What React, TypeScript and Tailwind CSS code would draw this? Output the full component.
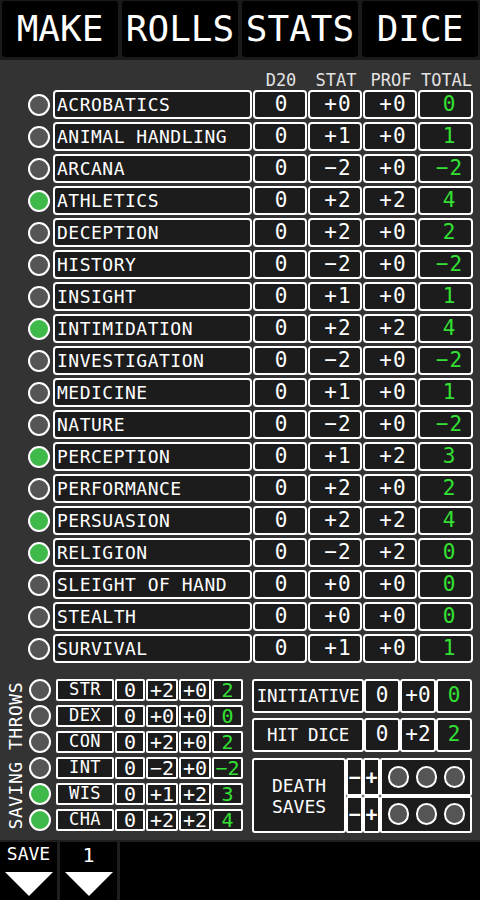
const tabs = ["MAKE", "ROLLS", "STATS", "DICE"];

const skills: [string, boolean, string, string, string][] = [
  ["ACROBATICS", false, "+0", "+0", "0"],
  ["ANIMAL HANDLING", false, "+1", "+0", "1"],
  ["ARCANA", false, "−2", "+0", "−2"],
  ["ATHLETICS", true, "+2", "+2", "4"],
  ["DECEPTION", false, "+2", "+0", "2"],
  ["HISTORY", false, "−2", "+0", "−2"],
  ["INSIGHT", false, "+1", "+0", "1"],
  ["INTIMIDATION", true, "+2", "+2", "4"],
  ["INVESTIGATION", false, "−2", "+0", "−2"],
  ["MEDICINE", false, "+1", "+0", "1"],
  ["NATURE", false, "−2", "+0", "−2"],
  ["PERCEPTION", true, "+1", "+2", "3"],
  ["PERFORMANCE", false, "+2", "+0", "2"],
  ["PERSUASION", true, "+2", "+2", "4"],
  ["RELIGION", true, "−2", "+2", "0"],
  ["SLEIGHT OF HAND", false, "+0", "+0", "0"],
  ["STEALTH", false, "+0", "+0", "0"],
  ["SURVIVAL", false, "+1", "+0", "1"],
];

const saves: [string, boolean, string, string, string][] = [
  ["STR", false, "+2", "+0", "2"],
  ["DEX", false, "+0", "+0", "0"],
  ["CON", false, "+2", "+0", "2"],
  ["INT", false, "−2", "+0", "−2"],
  ["WIS", true, "+1", "+2", "3"],
  ["CHA", true, "+2", "+2", "4"],
];

function Dot({ on, size = "w-[22px] h-[22px]" }: { on: boolean; size?: string }) {
  return (
    <div
      className={`${size} shrink-0 rounded-full border-2 border-white ${
        on ? "bg-[#3fb94a]" : "bg-[#555555]"
      }`}
    />
  );
}

function Triangle() {
  return (
    <svg width="48" height="24" viewBox="0 0 48 24">
      <polygon points="0,0 48,0 24,24" fill="#ffffff" />
    </svg>
  );
}

export default function App() {
  return (
    <div
      className="flex h-[900px] w-[480px] flex-col overflow-hidden bg-[#333333] text-white"
      style={{ fontFamily: '"DejaVu Sans Mono", "Liberation Mono", monospace' }}
    >
      {/* tabs */}
      <div className="flex h-[60px] shrink-0 gap-[4px] bg-[#1a1a1a] px-[2px] pb-[3px] pt-[1px]">
        {tabs.map((t) => (
          <div
            key={t}
            className="flex flex-1 items-center justify-center rounded-[3px] bg-black text-[36px] leading-none"
          >
            {t}
          </div>
        ))}
      </div>

      <main className="flex flex-1 flex-col">
        {/* column titles */}
        <div className="flex h-[30px] items-end pb-[1px] pl-[254px] text-[17px] leading-[17px] text-[#e2e2e2]">
          <span className="w-[54px] text-center">D20</span>
          <span className="ml-[1px] w-[54px] text-center">STAT</span>
          <span className="ml-[1px] w-[54px] text-center">PROF</span>
          <span className="ml-[1px] w-[55px] text-center">TOTAL</span>
        </div>

        {/* skills */}
        <div className="flex flex-col gap-[3px]">
          {skills.map(([name, prof, stat, bonus, total]) => (
            <div key={name} className="flex h-[29px] items-center pl-[28px]">
              <Dot on={prof} />
              <div className="ml-[3px] flex h-full w-[199px] items-center rounded-[4px] border-2 border-white bg-[#1c1c1c] pl-[2px] text-[18px] tracking-[0.5px]">
                {name}
              </div>
              <div className="ml-[1px] flex h-full w-[54px] items-center justify-center rounded-[4px] border-2 border-white bg-[#1c1c1c] pl-[2px] text-[21px]">
                0
              </div>
              <div className="ml-[1px] flex h-full w-[54px] items-center justify-center rounded-[4px] border-2 border-white bg-[#1c1c1c] pl-[6px] text-[21px] tracking-[1px]">
                {stat}
              </div>
              <div className="ml-[1px] flex h-full w-[54px] items-center justify-center rounded-[4px] border-2 border-white bg-[#1c1c1c] pl-[6px] text-[21px] tracking-[1px]">
                {bonus}
              </div>
              <div className="ml-[1px] flex h-full w-[55px] items-center justify-center rounded-[4px] border-2 border-white bg-[#1c1c1c] pl-[8px] text-[21px] tracking-[1px] text-[#33e033]">
                {total}
              </div>
            </div>
          ))}
        </div>

        {/* saving throws + misc */}
        <div className="mt-[16px] flex">
          <div className="flex pl-[6px]">
            <div className="flex w-[20px] items-center justify-center">
              <span className="rotate-180 text-[18px] leading-none tracking-[0.5px] [writing-mode:vertical-rl]">
                SAVING THROWS
              </span>
            </div>
            <div className="ml-[3px] flex flex-col gap-[4px]">
              {saves.map(([name, prof, stat, bonus, total]) => (
                <div key={name} className="flex h-[22px] items-center">
                  <Dot on={prof} size="w-[22px] h-[22px]" />
                  <div className="ml-[5px] flex h-full w-[58px] items-center justify-center rounded-[2px] border-2 border-white bg-[#1c1c1c] text-[17px] tracking-[0.5px]">
                    {name}
                  </div>
                  <div className="ml-[1px] flex h-full w-[30px] items-center justify-center rounded-[2px] border-2 border-white bg-[#1c1c1c] text-[20px]">
                    0
                  </div>
                  <div className="ml-[1px] flex h-full w-[32px] items-center justify-center rounded-[2px] border-2 border-white bg-[#1c1c1c] text-[20px]">
                    {stat}
                  </div>
                  <div className="ml-[1px] flex h-full w-[32px] items-center justify-center rounded-[2px] border-2 border-white bg-[#1c1c1c] text-[20px]">
                    {bonus}
                  </div>
                  <div className="ml-[1px] flex h-full w-[31px] items-center justify-center rounded-[2px] border-2 border-white bg-[#1c1c1c] text-[20px] text-[#33e033]">
                    {total}
                  </div>
                </div>
              ))}
            </div>
          </div>

          <div className="ml-[9px] flex w-[220px] flex-col">
            <div className="flex h-[34px]">
              <div className="flex w-[112px] items-center justify-center rounded-[3px] border-2 border-white bg-[#1c1c1c] text-[17.5px] tracking-[-0.3px]">
                INITIATIVE
              </div>
              <div className="flex w-[36px] items-center justify-center rounded-[3px] border-2 border-white bg-[#1c1c1c] text-[21px]">
                0
              </div>
              <div className="flex w-[36px] items-center justify-center rounded-[3px] border-2 border-white bg-[#1c1c1c] text-[21px]">
                +0
              </div>
              <div className="flex w-[36px] items-center justify-center rounded-[3px] border-2 border-white bg-[#1c1c1c] text-[21px] text-[#33e033]">
                0
              </div>
            </div>

            <div className="mt-[5px] flex h-[34px]">
              <div className="flex w-[112px] items-center justify-center rounded-[3px] border-2 border-white bg-[#1c1c1c] text-[17.5px] tracking-[-0.3px]">
                HIT DICE
              </div>
              <div className="flex w-[36px] items-center justify-center rounded-[3px] border-2 border-white bg-[#1c1c1c] text-[21px]">
                0
              </div>
              <div className="flex w-[36px] items-center justify-center rounded-[3px] border-2 border-white bg-[#1c1c1c] text-[21px]">
                +2
              </div>
              <div className="flex w-[36px] items-center justify-center rounded-[3px] border-2 border-white bg-[#1c1c1c] text-[21px] text-[#33e033]">
                2
              </div>
            </div>

            <div className="mt-[6px] flex h-[75px]">
              <div className="flex w-[94px] flex-col items-center justify-center rounded-[3px] border-2 border-white bg-[#1c1c1c] text-[18px] leading-[21px]">
                <span>DEATH</span>
                <span>SAVES</span>
              </div>
              <div className="flex flex-1 flex-col">
                {[0, 1].map((r) => (
                  <div key={r} className="flex flex-1">
                    <div className="flex w-[17px] items-center justify-center rounded-[2px] border-2 border-white bg-[#1c1c1c] text-[20px] font-bold">
                      −
                    </div>
                    <div className="flex w-[17px] items-center justify-center rounded-[2px] border-2 border-white bg-[#1c1c1c] text-[20px] font-bold">
                      +
                    </div>
                    <div className="flex flex-1 items-center justify-center gap-[7px] rounded-[2px] border-2 border-white bg-[#1c1c1c]">
                      <Dot on={false} size="w-[21px] h-[22px]" />
                      <Dot on={false} size="w-[21px] h-[22px]" />
                      <Dot on={false} size="w-[21px] h-[22px]" />
                    </div>
                  </div>
                ))}
              </div>
            </div>
          </div>
        </div>
      </main>

      {/* bottom bar */}
      <div className="flex h-[60px] shrink-0 border-t-2 border-[#1e1e1e] bg-black">
        <div className="flex w-[60px] flex-col items-center border-r-[3px] border-[#1e1e1e] pt-[3px]">
          <span className="text-[18px] leading-[18px]">SAVE</span>
          <div className="mt-[9px]">
            <Triangle />
          </div>
        </div>
        <div className="flex w-[60px] flex-col items-center border-r-[3px] border-[#1e1e1e] pt-[3px]">
          <span className="text-[20px] leading-[20px]">1</span>
          <div className="mt-[7px]">
            <Triangle />
          </div>
        </div>
      </div>
    </div>
  );
}
